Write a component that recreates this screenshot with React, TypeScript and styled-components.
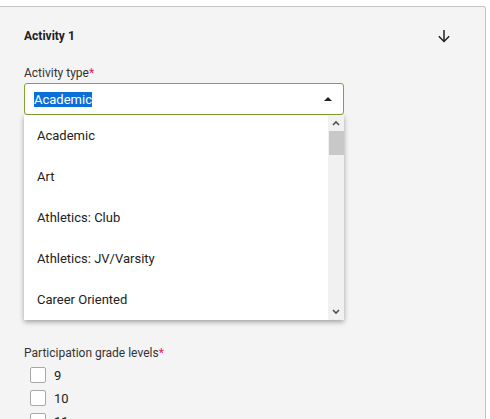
import React from "react";
import styled, { createGlobalStyle } from "styled-components";

const Global = createGlobalStyle`
  html, body { margin: 0; padding: 0; background: #ffffff; }
  body { font-family: Roboto, "Noto Sans", Arial, sans-serif; color: #222; }
`;

const Panel = styled.div`
  margin-top: 6px;
  width: 486px;
  height: 420px;
  box-sizing: border-box;
  background: #f4f4f4;
  border-top: 1px solid #c4c4c4;
  border-right: 1px solid #c4c4c4;
  border-top-right-radius: 3px;
  padding: 16px 0 0 24px;
`;

const Header = styled.div`
  display: flex;
  align-items: center;
  justify-content: space-between;
  width: 428px;
  height: 26px;
`;

const Title = styled.h3`
  margin: 0;
  font-size: 12px;
  font-weight: 700;
  color: #222;
`;

const IconBtn = styled.span`
  display: flex;
  width: 16px;
  height: 16px;
  color: #222;
`;

const Label = styled.div`
  font-size: 12px;
  color: #333;
  margin-top: 16px;
  line-height: 16px;
`;

const Req = styled.span`
  color: #e0245e;
`;

const SelectWrap = styled.div`
  position: relative;
  width: 320px;
  margin-top: 2px;
`;

const SelectBox = styled.div`
  box-sizing: border-box;
  height: 32px;
  border: 1px solid #84a332;
  border-radius: 3px;
  background: #fff;
  display: flex;
  align-items: center;
  justify-content: space-between;
  padding: 0 11px 0 9px;
`;

const Selected = styled.span`
  font-size: 13px;
  line-height: 15px;
  background: #0a6fd8;
  color: #fff;
`;

const Caret = styled.span`
  width: 0;
  height: 0;
  border-left: 4px solid transparent;
  border-right: 4px solid transparent;
  border-bottom: 4px solid #222;
`;

const ListBox = styled.div`
  position: absolute;
  top: 32px;
  left: 0;
  width: 320px;
  height: 205px;
  background: #fff;
  box-shadow: 0 2px 5px rgba(0, 0, 0, 0.35);
  display: flex;
  overflow: hidden;
`;

const Options = styled.ul`
  list-style: none;
  margin: 0;
  padding: 0;
  flex: 1;
`;

const Option = styled.li`
  height: 41px;
  display: flex;
  align-items: center;
  padding-left: 13px;
  font-size: 13px;
  color: #222;
`;

const ScrollTrack = styled.div`
  width: 16px;
  background: #f1f1f1;
  display: flex;
  flex-direction: column;
  align-items: center;
`;

const ScrollArrow = styled.div`
  height: 16px;
  width: 16px;
  display: flex;
  align-items: center;
  justify-content: center;
  color: #505050;
`;

const Thumb = styled.div`
  width: 15px;
  height: 24px;
  background: #c8c8c8;
`;

const Spacer = styled.div`
  flex: 1;
`;

const GradeLabel = styled(Label)`
  margin-top: 230px;
`;

const CheckList = styled.div`
  display: flex;
  flex-direction: column;
  gap: 7px;
  margin-top: 6px;
  padding-left: 6px;
`;

const CheckRow = styled.label`
  display: flex;
  align-items: center;
  gap: 8px;
  font-size: 13px;
  color: #222;
  height: 16px;
`;

const Box = styled.span`
  box-sizing: border-box;
  width: 16px;
  height: 16px;
  border: 1px solid #a8a8a8;
  border-radius: 2px;
  background: #fff;
`;

const options = ["Academic", "Art", "Athletics: Club", "Athletics: JV/Varsity", "Career Oriented"];

export default function App() {
  return (
    <>
      <Global />
      <Panel>
        <Header>
          <Title>Activity 1</Title>
          <IconBtn>
            <svg width="16" height="16" viewBox="0 0 16 16" fill="none" stroke="currentColor" strokeWidth="1.5">
              <path d="M8 2v11.5" />
              <path d="M2.8 8.3L8 13.5l5.2-5.2" />
            </svg>
          </IconBtn>
        </Header>
        <Label>
          Activity type<Req>*</Req>
        </Label>
        <SelectWrap>
          <SelectBox>
            <Selected>Academic</Selected>
            <Caret />
          </SelectBox>
          <ListBox>
            <Options>
              {options.map((o) => (
                <Option key={o}>{o}</Option>
              ))}
            </Options>
            <ScrollTrack>
              <ScrollArrow>
                <svg width="8" height="6" viewBox="0 0 8 6" fill="none" stroke="currentColor" strokeWidth="1.6">
                  <path d="M1 5l3-3 3 3" />
                </svg>
              </ScrollArrow>
              <Thumb />
              <Spacer />
              <ScrollArrow>
                <svg width="8" height="6" viewBox="0 0 8 6" fill="none" stroke="currentColor" strokeWidth="1.6">
                  <path d="M1 1l3 3 3-3" />
                </svg>
              </ScrollArrow>
            </ScrollTrack>
          </ListBox>
        </SelectWrap>
        <GradeLabel>
          Participation grade levels<Req>*</Req>
        </GradeLabel>
        <CheckList>
          {["9", "10", "11"].map((g) => (
            <CheckRow key={g}>
              <Box />
              {g}
            </CheckRow>
          ))}
        </CheckList>
      </Panel>
    </>
  );
}
